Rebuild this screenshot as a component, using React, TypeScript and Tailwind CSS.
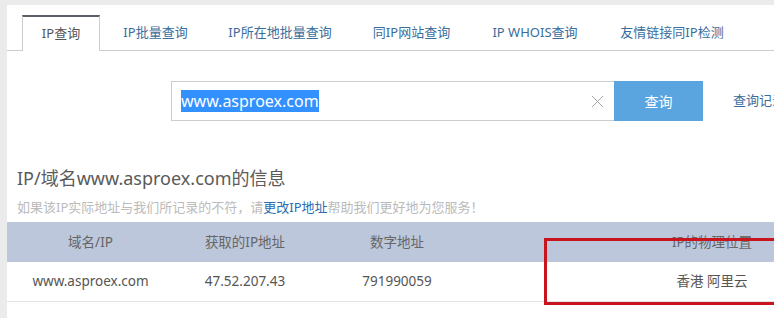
import React from "react";

const tabs = [
    { label: "IP查询", width: "w-[78px]", active: true },
    { label: "IP批量查询", width: "w-[99px]" },
    { label: "IP所在地批量查询", width: "w-[138px]" },
    { label: "同IP网站查询", width: "w-[113px]" },
    { label: "IP WHOIS查询", width: "w-[122px]" },
    { label: "友情链接同IP检测", width: "w-[140px]" },
];

const font = { fontFamily: '"Noto Sans", "Noto Sans CJK SC", sans-serif' };

const App: React.FC = () => {
    return (
        <div
            className="w-[774px] h-[318px] overflow-hidden bg-[#ebebeb] pt-[5px] pl-[7px]"
            style={font}
        >
            <div className="relative bg-white w-[1000px] h-[400px]">
                {/* tabs */}
                <div className="flex gap-[6px] pt-[10px] pl-[15px] border-b border-[#cccccc] h-[46px]">
                    {tabs.map((t) => (
                        <div
                            key={t.label}
                            className={
                                t.active
                                    ? `${t.width} h-[36px] -mb-px bg-white border-t-2 border-x border-t-[#5b6068] border-x-[#cccccc] flex items-center justify-center text-[13px] text-[#555555]`
                                    : `${t.width} h-[35px] flex items-center justify-center text-[13px] text-[#3a6d9b]`
                            }
                        >
                            {t.label}
                        </div>
                    ))}
                </div>

                {/* search */}
                <div className="flex items-center mt-[30px] pl-[164px]">
                    <div className="w-[443px] h-[40px] border border-[#cccccc] border-r-0 flex items-center pl-[9px] pr-[10px]">
                        <span className="text-[16px] leading-[22px] bg-[#3390ff] text-white">www.asproex.com</span>
                        <span className="ml-auto">
                            <svg width="13" height="13" viewBox="0 0 13 13">
                                <path d="M1 1L12 12M12 1L1 12" stroke="#a8a8a8" strokeWidth="1" fill="none" />
                            </svg>
                        </span>
                    </div>
                    <button className="w-[89px] h-[40px] bg-[#5aa5e0] text-white text-[14px]">查询</button>
                    <span className="ml-[30px] text-[13px] text-[#3a6d9b] whitespace-nowrap">查询记录</span>
                </div>

                {/* info */}
                <div className="pl-[10px] mt-[43px]">
                    <h2 className="text-[18px] leading-[28px] text-[#5a5a5a]">IP/域名www.asproex.com的信息</h2>
                    <p className="text-[13px] leading-[20px] mt-[5px] text-[#bbbbbb]">
                        如果该IP实际地址与我们所记录的不符，请<span className="text-[#2a6db0]">更改IP地址</span>帮助我们更好地为您服务！
                    </p>
                </div>

                {/* table */}
                <div className="mt-[5px]">
                    <div className="grid grid-cols-[157px_152px_152px_478px] pl-[5px] h-[40px] bg-[#bcc7dc] items-center text-center text-[13.5px] text-[#666666]">
                        <div>域名/IP</div>
                        <div>获取的IP地址</div>
                        <div>数字地址</div>
                        <div>IP的物理位置</div>
                    </div>
                    <div className="grid grid-cols-[157px_152px_152px_478px] pl-[5px] h-[40px] border-b border-[#e4e4e4] items-center text-center text-[13.5px] text-[#555555]">
                        <div>www.asproex.com</div>
                        <div>47.52.207.43</div>
                        <div>791990059</div>
                        <div>香港 阿里云</div>
                    </div>
                </div>

                <div className="pl-[10px] mt-[15px] text-[17px] leading-[24px] text-[#333333]">最近查询记录</div>

                {/* red annotation box */}
                <div className="absolute left-[537px] top-[233px] w-[300px] h-[67px] border-[3px] border-[#c8141c]"></div>
            </div>
        </div>
    );
};

export default App;
